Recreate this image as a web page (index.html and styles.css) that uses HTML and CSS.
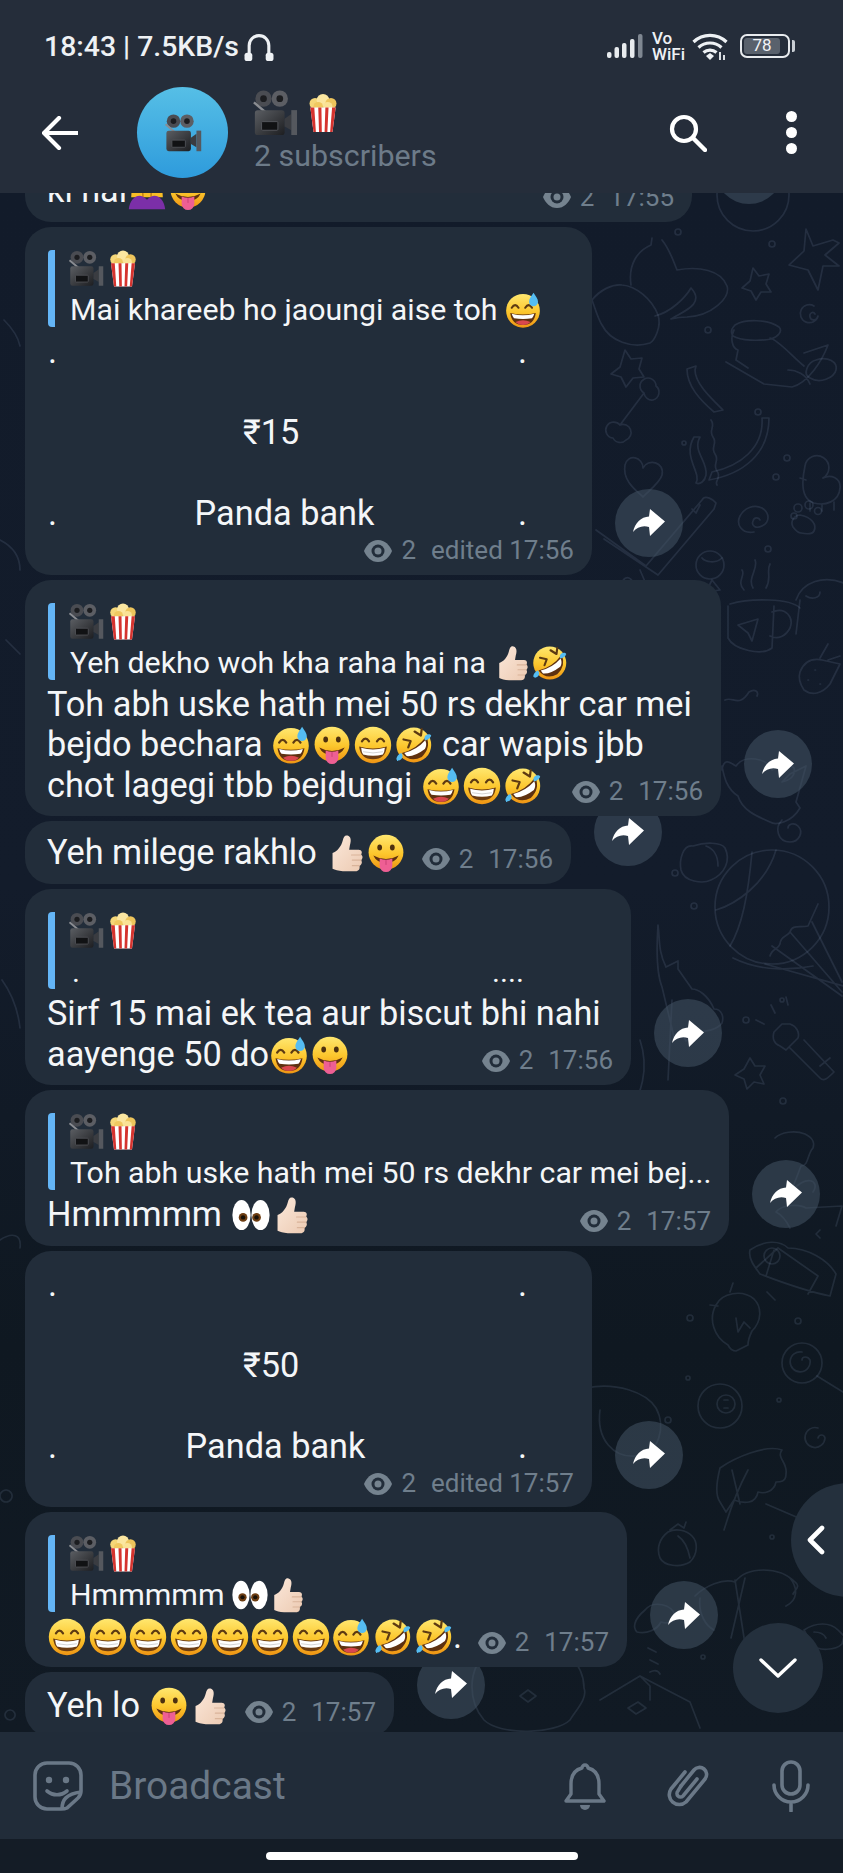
FILE: index.html
```html
<!DOCTYPE html>
<html lang="en">
<head>
<meta charset="utf-8">
<title>Channel</title>
<link rel="stylesheet" href="styles.css">
</head>
<body>
<svg class="defs" aria-hidden="true">
  <defs>
    <linearGradient id="gFace" x1="0" y1="0" x2="0" y2="1"><stop offset="0" stop-color="#ffe76f"/><stop offset=".55" stop-color="#fcc62c"/><stop offset="1" stop-color="#ee9414"/></linearGradient>
    <linearGradient id="gBody" x1="0" y1="0" x2="1" y2="1"><stop offset="0" stop-color="#5b5e63"/><stop offset="1" stop-color="#1d1e21"/></linearGradient>
    <linearGradient id="gThumb" x1="0" y1="0" x2="1" y2="1"><stop offset="0" stop-color="#fbe8da"/><stop offset="1" stop-color="#eccab2"/></linearGradient>
    <symbol id="grin" viewBox="0 0 48 48"><circle cx="24" cy="24" r="23" fill="url(#gFace)"/><path d="M10 19.500q4.500-7 9 0M29 19.500q4.500-7 9 0" fill="none" stroke="#5d3a12" stroke-width="2.800" stroke-linecap="round"/><path d="M6.500 26Q24 31 41.500 26 40 42 24 42 8 42 6.500 26z" fill="#6b3c12"/><path d="M9 27.500Q24 32 39 27.500 38.500 33 36.500 36 24 39 11.500 36 9.500 33 9 27.500z" fill="#fff"/><path d="M11.500 32.500Q24 35.500 36.500 32.500" fill="none" stroke="#c9c9c9" stroke-width="1"/></symbol>
    <symbol id="sweat" viewBox="0 0 48 48"><circle cx="24" cy="25" r="22.500" fill="url(#gFace)"/><path d="M9 21q4.500-7 9 0M27 21q4.500-7 9 0" fill="none" stroke="#5d3a12" stroke-width="2.800" stroke-linecap="round"/><path d="M7 28Q24 32 41 28 39 44 24 44 9 44 7 28z" fill="#5e3110"/><path d="M9 29Q24 33 39 29 38 33 36 35 24 37 12 35 10 33 9 29z" fill="#fff"/><path d="M14 40q10-5 20 0-4 4-10 4t-10-4z" fill="#d9484e"/><path d="M38 1c3 5 6 8 6 12a6 6 0 0 1-12 0c0-4 3-7 6-12z" fill="#55bdf2"/></symbol>
    <symbol id="tongue" viewBox="0 0 48 48"><circle cx="24" cy="23" r="22" fill="url(#gFace)"/><ellipse cx="16" cy="17" rx="3" ry="3.800" fill="#4d300f"/><ellipse cx="32" cy="17" rx="3" ry="3.800" fill="#4d300f"/><path d="M8 27Q24 36 40 27 36 36 24 37 12 36 8 27z" fill="#5e3110"/><path d="M16 31q8 3 16 0v9a8 8 0 0 1-16 0z" fill="#ee5f94"/><path d="M24 33v6" stroke="#c93f74" stroke-width="1.200"/></symbol>
    <symbol id="rofl" viewBox="0 0 48 48"><circle cx="25" cy="24" r="22" fill="url(#gFace)"/><path d="M26 7l8 5 1-8M12 17l9 2-3 8" fill="none" stroke="#5d3a12" stroke-width="2.800" stroke-linecap="round" stroke-linejoin="round"/><path d="M10 34Q28 30 41 13 47 28 35 39 20 47 10 34z" fill="#5e3110"/><path d="M13 34Q29 30 39.500 18 42 24 39 29 26 39 16 38z" fill="#fff"/><path d="M3 42c0-3 3-7 6-8 2 2 3 5 0 8-2 2-5 2-6 0z" fill="#55bdf2"/><path d="M47 12c-1 3-4 6-8 6-1-2-1-5 2-7 2-1 5-1 6 1z" fill="#55bdf2"/></symbol>
    <symbol id="thumb" viewBox="0 0 48 48"><path d="M7 24C13 22 18 16 20 8 21 3 23 1 26 2 30 3 31 8 29 14L28 20H40C44 20 45 24 43 26 46 28 45 32 43 33 45 35 44 39 41 40 42 44 40 47 36 47H20C14 47 10 45 7 44z" fill="url(#gThumb)"/><path d="M31 26.500h12M32 33h11M32 40h9" stroke="#d9b49a" stroke-width="1.400" stroke-linecap="round"/></symbol>
    <symbol id="eyes" viewBox="0 0 48 48"><ellipse cx="12" cy="24" rx="11.500" ry="19" fill="#fff"/><ellipse cx="36" cy="24" rx="11.500" ry="19" fill="#fff"/><circle cx="14" cy="27" r="5.500" fill="#6d3d12"/><circle cx="14" cy="27" r="2.800" fill="#171008"/><circle cx="31" cy="27" r="5.500" fill="#6d3d12"/><circle cx="31" cy="27" r="2.800" fill="#171008"/></symbol>
    <symbol id="bow" viewBox="0 0 48 48"><path d="M6 2h36l2 30H4z" fill="#f8bd26"/><path d="M17 2l2 30M31 2l-2 30" stroke="#c98512" stroke-width="2"/><path d="M1 47c1-9 6-17 14-17 4 0 7 3 9 5 2-2 5-5 9-5 8 0 13 8 14 17z" fill="#7b2fa8"/></symbol>
    <symbol id="camera" viewBox="0 0 48 48"><circle cx="12" cy="9" r="8.500" fill="#4a4c52"/><circle cx="12" cy="9" r="3.500" fill="#1c1d20"/><circle cx="29" cy="9" r="8.500" fill="#5c5e64"/><circle cx="29" cy="9" r="3.500" fill="#1c1d20"/><path d="M2 13l13 11" stroke="#8b8d92" stroke-width="2.500"/><rect x="3" y="21" width="31" height="26" rx="3" fill="url(#gBody)"/><rect x="10" y="33" width="17" height="9" rx="1" fill="#111214" stroke="#55575c"/><path d="M34 30l7-5v17l-7-4z" fill="#3a3c41"/><path d="M41 21h6v26h-6z" fill="#55585e"/></symbol>
    <symbol id="popcorn" viewBox="0 0 48 48"><circle cx="14" cy="12" r="7" fill="#f5d778"/><circle cx="24" cy="8" r="8" fill="#fbe6a0"/><circle cx="34" cy="12" r="7" fill="#eec55c"/><circle cx="18" cy="16" r="6" fill="#f0c85f"/><circle cx="30" cy="16" r="6" fill="#fae295"/><path d="M8 17h32l-4 31H12z" fill="#fff"/><path d="M8 17h5l2 31h-3zM18 17h4l.5 31h-3.500zM27 17h4l-1.500 31H26zM35.500 17H40l-4 31h-3z" fill="#d5332e"/></symbol>
    <symbol id="eye" viewBox="0 0 28 22"><path d="M14 0C7 0 2.500 5 0 11c2.500 6 7 11 14 11s11.500-5 14-11C25.500 5 21 0 14 0z" fill="#75838f"/><circle cx="14" cy="11" r="6.500" fill="#222d3a"/><circle cx="14" cy="11" r="3.500" fill="#75838f"/></symbol>
    <symbol id="fwd" viewBox="0 0 32 27"><path d="M17 0l15 12.500L17 27l-1-9C10 16 4 18 0 23 2 14 8 8 16 7.500z" fill="#fff"/></symbol>
  </defs>
</svg>

<div class="app">
  <header class="top">
    <div class="status">
      <span class="clock">18:43 | 7.5KB/s</span>
      <svg class="phones" viewBox="0 0 29 28"><path d="M5 24V13a9.500 9.500 0 0 1 19 0v11" fill="none" stroke="#eef1f4" stroke-width="3"/><rect x="0.500" y="20" width="7.500" height="8" rx="2.500" fill="#eef1f4"/><rect x="21" y="20" width="7.500" height="8" rx="2.500" fill="#eef1f4"/></svg>
      <div class="status-right">
        <svg class="signal" viewBox="0 0 36 24"><rect x="0" y="18" width="4.500" height="6" rx="2" fill="#e8ebee"/><rect x="7.500" y="13" width="4.500" height="11" rx="2" fill="#e8ebee"/><rect x="15" y="9" width="4.500" height="15" rx="2" fill="#e8ebee"/><rect x="23" y="5" width="4.500" height="19" rx="2" fill="#e8ebee"/><rect x="31" y="0" width="4.500" height="24" rx="2" fill="#7f8791"/></svg>
        <div class="vowifi"><span>Vo</span><span>WiFi</span></div>
        <svg class="wifi" viewBox="0 0 36 28"><path d="M1.500 10a24 24 0 0 1 33 0M6.500 15.500a17 17 0 0 1 23 0M11.500 20.500a10 10 0 0 1 13 0" fill="none" stroke="#eef1f4" stroke-width="3.200"/><path d="M14 24l4-3 4 3-4 4z" fill="#eef1f4"/><path d="M28 20v8M32 23v5" stroke="#eef1f4" stroke-width="1.800"/></svg>
        <div class="battery"><span class="batt-num">78</span></div>
        <span class="batt-tip"></span>
      </div>
    </div>
    <div class="bar">
      <svg class="back" viewBox="0 0 36 34"><path d="M17 2L2 17l15 15M3 17h32" fill="none" stroke="#fff" stroke-width="4.200" stroke-linecap="round" stroke-linejoin="round"/></svg>
      <div class="avatar"><svg class="avatar-cam"><use href="#camera"/></svg></div>
      <div class="title">
        <div class="title-em"><svg class="t-cam"><use href="#camera"/></svg><svg class="t-pop"><use href="#popcorn"/></svg></div>
        <div class="subs">2 subscribers</div>
      </div>
      <svg class="search" viewBox="0 0 38 38"><circle cx="15" cy="15" r="12" fill="none" stroke="#fff" stroke-width="4.200"/><path d="M24 24l12 12" stroke="#fff" stroke-width="4.400" stroke-linecap="round"/></svg>
      <div class="dots"><i></i><i></i><i></i></div>
    </div>
  </header>

  <main class="chat">
    <svg class="paper" viewBox="0 193 843 1540" aria-hidden="true">
      <g fill="none" stroke="#8ea4c4" stroke-opacity=".15" stroke-width="1.700" stroke-linecap="round" stroke-linejoin="round">
        <circle cx="753" cy="195" r="36"/>
        <path d="M806 229l7 17 20-6 6 3-14 12 14 11-16 0-5 24-10-20-19-5 15-14z"/>
        <path d="M753 268l6 8 10-2-3 10 5 8-10 0-5 8-5-9-9-3 8-7z"/>
        <path d="M814 306a9 9 0 1 0 4 10c-1 5-7 5-8 1-1-4 3-6 5-3"/>
        <circle cx="678" cy="232" r="3"/><circle cx="772" cy="244" r="3"/><circle cx="708" cy="330" r="3"/><circle cx="758" cy="412" r="3"/><circle cx="787" cy="458" r="3"/><circle cx="776" cy="477" r="3"/><circle cx="768" cy="549" r="3"/><circle cx="684" cy="443" r="2"/>
        <path d="M592 300c8-10 20-16 30-15 14 1 30 14 36 30 4 12-4 26-8 28-18 6-40-2-48-18-4-6-8-20-10-25z"/>
        <path d="M631 285c-3-20 6-34 20-40l1-7M662 240c8 10 11 20 15 30 22-4 44 0 50 16 4 12-16 30-40 31-6 0-12 1-16 2 8-6 36-14 20-31-6 10-20 24-36 28"/>
        <path d="M625 350l6 9 11-1-3 11 5 8-11 1-7 9-5-10-10-3 9-7z"/>
        <path d="M620 425l24-32m0 0a8 8 0 1 1 12-7 8 8 0 0 1-3 14 8 8 0 0 1-9-7zm-24 32a8 8 0 1 0-7 13 8 8 0 0 0 13 2 8 8 0 0 0-6-15z"/>
        <path d="M695 370c0 14 18 30 28 40l-9 2c-14-12-27-26-27-43l9-3z"/>
        <path d="M711 420c5 7-3 10 2 17s-3 10 2 17-3 10 2 17-3 10 0 14"/>
        <path d="M762 418c2 30-22 48-50 54l-3 8c34-6 60-26 60-62z"/>
        <path d="M700 437c-8 14 8 24 6 38-1 6-6 10-10 8 6-10-14-26-2-46z"/>
        <path d="M735 325c10-6 32-6 44 2 4 4-1 10-8 12-12 2-30 2-38-3-3-4-1-8 2-11zM734 330c-4 8-2 18 4 20l-2 10 12 8M770 338c8 2 20 16 34 28M726 362l38 22 28 3c16-4 30-26 36-42l-24 8M788 370c8 0 18 4 22 14"/>
        <path d="M816 360c-8 2-14 14-6 18 10 6 24 0 26-8 2-8-8-14-20-10z"/>
        <path d="M805 466a12 12 0 1 1 18 12c8-4 18 0 17 10-1 14-15 18-26 15-10-3-14-14-9-37zM806 480l-6-2M810 503v8M822 505v6M834 502v8"/>
        <path d="M800 515c-6 0-10 7-7 12 3 4 5 6 8 6 5 1 11 2 13-2 3-6-2-14-14-16z"/><circle cx="798" cy="508" r="4"/><circle cx="809" cy="505" r="4"/><circle cx="818" cy="511" r="3.500"/><circle cx="794" cy="516" r="3"/>
        <path d="M754 532c-13 2-18-8-14-16s14-12 22-8c8 5 8 14 0 18-6 3-11 0-9-5 1-4 6-4 7-1"/>
        <path d="M625 465c3-12 18-8 18 3 5-10 22-6 19 7-2 8-16 18-19 22-6-6-21-16-18-32z"/>
        <path d="M596 530l50 36 56-66c3-6 12 0 14 3l-2 6-56 66-54-36M700 505l-4 8-4-4"/>
        <circle cx="710" cy="565" r="14"/><path d="M702 558c3 4 14 6 20 0M712 580l-6 12 14-2z"/>
        <path d="M624 595c-8-18 8-24 10-8 1 8-2 12-3 14M640 570l6 14"/>
        <path d="M742 570c4 5-6 12 2 20M755 560c4 8-8 18-2 28M770 564c-4 8 2 14-4 24M730 604c20-6 60-6 70 4"/>
        <path d="M796 600c6-18 28-26 50-16M800 600l-4 34M806 596c6 4 14 2 14-4"/>
        <path d="M728 606v32c6 12 34 18 44 10l2-42M772 612c14-6 22 6 18 16-4 8-12 12-20 8"/><path d="M738 625l20-6-6 22-4-8z"/>
        <path d="M800 672c4-10 12-14 22-12l18 4-10 20c-8 10-18 12-26 6-4-6-6-12-4-18zM820 658l8-14M828 660l12-4M815 670h.5M808 680h.5M820 684h.5"/>
        <path d="M722 770c2-14 10-6 14-4 8-12 32-8 36 4 6-4 16-8 22-2 2 8-4 12-12 14l8-8 16-8-10 36 4 6c-8 14-24 18-30 14-14-6-28-12-32-26-12-8-14-20-16-30zM725 700c8-4 14 8 24-8 6-4 10 0 8 4"/>
        <path d="M782 820c-8 8-4 22 8 22 9 0 14-10 8-16-4-4-10-2-10 2"/>
        <path d="M693 846c-10-2-14 14-12 24 3 12 22 14 30 10 14-6 20-20 14-32-4-6-20-6-32-2zM706 846c6 2 12 8 12 20"/>
        <circle cx="675" cy="873" r="3"/><circle cx="694" cy="906" r="3"/><circle cx="746" cy="1020" r="3"/><circle cx="782" cy="1000" r="2"/><circle cx="783" cy="1101" r="3"/>
        <circle cx="772" cy="907" r="57"/>
        <path d="M716 910c20-6 50-26 60-60M730 946c12-20 18-50 22-94M733 958c28 14 60 12 80 8M770 956c2-8 8-6 10-12 0-8 8-8 10-12 2-8 10-4 18-6l10-22M772 946l70 50M765 964l78 22M812 922l30 60M790 932l52 60"/>
        <path d="M658 925c2 14 0 26 8 42l12-6 0 8 14 20c6 0 16 6 22 20 8 0 10 8 8 14-6 8-18 8-28 10l-8 8c-4-10-10-2-12-4l-12-50c-4-10-6-32-4-62zM672 1000l-4 80"/>
        <path d="M782 1024l-8 8c-2 6 0 12 6 14l6 4 12-12c2-6-2-12-8-14zM790 1048l30 30c4 4 8 0 14-6l-30-32M820 1066l10-8M775 1013l-4-8M788 1005l-2-8M764 1024l-8-4"/>
        <path d="M750 1058l5 8 10 0-5 9 4 9-10-2-7 7-3-10-9-4 9-6z"/>
        <path d="M640 1040c10 30 0 56-10 70"/>
        <path d="M750 1250c14-10 30-10 38-2 20 0 40 12 48 26l-6 22c-20-4-44-12-70-22-6-8-12-16-10-24zM756 1268l22-20 40 28-10 18M774 1250l-8 26M790 1228c-4-8-10-14-14-16 6-8 24-8 30-4l36-2-6 20"/>
        <path d="M775 1138c6-6 20-8 30-4 8 4 10 8 8 14-6 6-4 18-12 18l-10 26c14-18 30-12 22 0"/>
        <circle cx="772" cy="1256" r="8"/><path d="M820 1230l-4 4 4 4"/>
        <path d="M775 1300l-8-8M730 1292l3-9M718 1306l-8-1M728 1345c-14-8-20-26-12-40 6-12 26-16 38-6 8 8 8 22-2 32-2 4-4 8-4 14l-12 6c-4 0-6-2-8-6zM736 1318l2 14 6-10 6 6"/>
        <circle cx="802" cy="1363" r="20"/><path d="M802 1352a10 10 0 1 0 8 8c-2-4-8-4-8 0M817 1376l26 16"/>
        <circle cx="720" cy="1406" r="22"/><circle cx="726" cy="1404" r="9"/><path d="M724 1400h4M724 1408h4"/>
        <path d="M818 1428a10 10 0 1 0 7 10c-1-4-6-4-7 0"/>
        <circle cx="690" cy="1318" r="3"/><circle cx="798" cy="1321" r="3"/><circle cx="688" cy="1378" r="2"/><circle cx="779" cy="1400" r="2"/><circle cx="668" cy="1420" r="3"/><circle cx="772" cy="1537" r="2"/><circle cx="703" cy="1657" r="2"/>
        <path d="M720 1468c14-10 46-24 62-18-6 8 6 12 4 24 0 8-6 8-10 8-2 10-12 12-18 10-2 12-14 12-24 8l-8 12-6-10c-6-8-2-26 0-34zM732 1470l8 34M724 1530c4-12 8-30 24-60M766 1504l70 30"/>
        <path d="M668 1532c-8 6-12 16-8 26 4 8 20 10 30 4 8-8 8-20 2-26-6-6-16-8-24-4zM670 1530l8-6 6 4 2-6M678 1536c6 4 10 12 12 22"/>
        <path d="M695 1596c10-10 28-18 40-14 12-16 44-16 60 0 6 4 0 8-2 12M735 1580l10 64M745 1578l-14 60M790 1578c8 10 8 22-4 28M700 1598c-2 16 6 28 14 32"/>
        <path d="M804 1630c12-8 26-8 34 0l6 6-2 8c-6 6-24 8-30 0zM814 1632c6 0 10 2 12 6"/>
        <path d="M600 1700l40-24 50 26 10 26M640 1676l10 10 0 14M628 1708l10-6 8 6-10 6zM648 1648l8 4M650 1660l8 4M650 1672c4-2 8-2 10 2"/>
        <path d="M645 1610c8-10 28-6 30 6 0 6-8 8-14 6-4 8-14 12-24 10-4-4-4-12 8-22z"/>
        <path d="M600 1410c-4 30 14 48 36 46 24-2 30-30 20-48-10-16-40-26-70-20"/>
        <path d="M490 1650c20-14 60-14 80 6 8 8 14 18 14 32 4 10-8 22-14 32-14 14-70 16-86 0-14-16-20-50 6-70zM520 1696l8-6 8 6-8 6z"/>
        <path d="M4 320c6 6 14 16 16 26M0 540c12 6 20 16 20 30M6 640l14 14M2 980c10 14 16 30 18 48M0 1240c12-8 22-6 20 8M6 1490a6 6 0 1 0 .1 0M10 1710a5 5 0 1 0 .1 0"/>
      </g>
    </svg>

    <section class="row first">
      <div class="bubble w1 pad-plain">
        <div class="last"><p class="txt">ki hai<svg class="em"><use href="#bow"/></svg><svg class="em"><use href="#tongue"/></svg></p><div class="meta"><svg class="eye"><use href="#eye"/></svg><span class="cnt">2</span><span>17:55</span></div></div>
      </div>
      <button class="fwd"><svg class="fwd-ic"><use href="#fwd"/></svg></button>
    </section>

    <section class="row">
      <div class="bubble w2 pad-reply pad-meta">
        <div class="reply">
          <div class="reply-em"><svg class="em-sm"><use href="#camera"/></svg><svg class="em-sm"><use href="#popcorn"/></svg></div>
          <div class="reply-txt">Mai khareeb ho jaoungi aise toh <svg class="em-r"><use href="#sweat"/></svg></div>
        </div>
        <div class="txt spread gap-t"><span>.</span><span>.</span></div>
        <div class="txt blank"></div>
        <div class="txt amount">₹15</div>
        <div class="txt blank"></div>
        <div class="txt spread"><span>.</span><span class="bank">Panda bank</span><span>.</span></div>
        <div class="meta meta-row"><svg class="eye"><use href="#eye"/></svg><span class="cnt">2</span><span>edited 17:56</span></div>
      </div>
      <button class="fwd"><svg class="fwd-ic"><use href="#fwd"/></svg></button>
    </section>

    <section class="row">
      <div class="bubble w3 pad-reply">
        <div class="reply">
          <div class="reply-em"><svg class="em-sm"><use href="#camera"/></svg><svg class="em-sm"><use href="#popcorn"/></svg></div>
          <div class="reply-txt">Yeh dekho woh kha raha hai na <svg class="em-r"><use href="#thumb"/></svg><svg class="em-r"><use href="#rofl"/></svg></div>
        </div>
        <p class="txt gap-t">Toh abh uske hath mei 50 rs dekhr car mei<br>bejdo bechara <svg class="em"><use href="#sweat"/></svg><svg class="em"><use href="#tongue"/></svg><svg class="em"><use href="#grin"/></svg><svg class="em"><use href="#rofl"/></svg> car wapis jbb</p>
        <div class="last"><p class="txt">chot lagegi tbb bejdungi <svg class="em"><use href="#sweat"/></svg><svg class="em"><use href="#grin"/></svg><svg class="em"><use href="#rofl"/></svg></p><div class="meta"><svg class="eye"><use href="#eye"/></svg><span class="cnt">2</span><span>17:56</span></div></div>
      </div>
      <button class="fwd"><svg class="fwd-ic"><use href="#fwd"/></svg></button>
    </section>

    <section class="row">
      <div class="bubble w4 pad-plain">
        <div class="last"><p class="txt">Yeh milege rakhlo <svg class="em"><use href="#thumb"/></svg><svg class="em"><use href="#tongue"/></svg></p><div class="meta"><svg class="eye"><use href="#eye"/></svg><span class="cnt">2</span><span>17:56</span></div></div>
      </div>
      <button class="fwd"><svg class="fwd-ic"><use href="#fwd"/></svg></button>
    </section>

    <section class="row">
      <div class="bubble w5 pad-reply">
        <div class="reply">
          <div class="reply-em"><svg class="em-sm"><use href="#camera"/></svg><svg class="em-sm"><use href="#popcorn"/></svg></div>
          <div class="reply-txt reply-dots"><span>.</span><span>....</span></div>
        </div>
        <p class="txt gap-t">Sirf 15 mai ek tea aur biscut bhi nahi</p>
        <div class="last"><p class="txt">aayenge 50 do<svg class="em"><use href="#sweat"/></svg><svg class="em"><use href="#tongue"/></svg></p><div class="meta"><svg class="eye"><use href="#eye"/></svg><span class="cnt">2</span><span>17:56</span></div></div>
      </div>
      <button class="fwd"><svg class="fwd-ic"><use href="#fwd"/></svg></button>
    </section>

    <section class="row">
      <div class="bubble w6 pad-reply">
        <div class="reply">
          <div class="reply-em"><svg class="em-sm"><use href="#camera"/></svg><svg class="em-sm"><use href="#popcorn"/></svg></div>
          <div class="reply-txt">Toh abh uske hath mei 50 rs dekhr car mei bej...</div>
        </div>
        <div class="last gap-t"><p class="txt">Hmmmmm <svg class="em"><use href="#eyes"/></svg><svg class="em"><use href="#thumb"/></svg></p><div class="meta"><svg class="eye"><use href="#eye"/></svg><span class="cnt">2</span><span>17:57</span></div></div>
      </div>
      <button class="fwd"><svg class="fwd-ic"><use href="#fwd"/></svg></button>
    </section>

    <section class="row">
      <div class="bubble w2 pad-top">
        <div class="txt spread"><span>.</span><span>.</span></div>
        <div class="txt blank"></div>
        <div class="txt amount">₹50</div>
        <div class="txt blank"></div>
        <div class="txt spread"><span>.</span><span class="bank bank-l">Panda bank</span><span>.</span></div>
        <div class="meta meta-row"><svg class="eye"><use href="#eye"/></svg><span class="cnt">2</span><span>edited 17:57</span></div>
      </div>
      <button class="fwd"><svg class="fwd-ic"><use href="#fwd"/></svg></button>
    </section>

    <section class="row">
      <div class="bubble w8 pad-reply">
        <div class="reply">
          <div class="reply-em"><svg class="em-sm"><use href="#camera"/></svg><svg class="em-sm"><use href="#popcorn"/></svg></div>
          <div class="reply-txt">Hmmmmm <svg class="em-r"><use href="#eyes"/></svg><svg class="em-r"><use href="#thumb"/></svg></div>
        </div>
        <div class="last gap-t"><p class="txt"><svg class="em"><use href="#grin"/></svg><svg class="em"><use href="#grin"/></svg><svg class="em"><use href="#grin"/></svg><svg class="em"><use href="#grin"/></svg><svg class="em"><use href="#grin"/></svg><svg class="em"><use href="#grin"/></svg><svg class="em"><use href="#grin"/></svg><svg class="em"><use href="#sweat"/></svg><svg class="em"><use href="#rofl"/></svg><svg class="em"><use href="#rofl"/></svg>.</p><div class="meta"><svg class="eye"><use href="#eye"/></svg><span class="cnt">2</span><span>17:57</span></div></div>
      </div>
      <button class="fwd"><svg class="fwd-ic"><use href="#fwd"/></svg></button>
    </section>

    <section class="row">
      <div class="bubble w9 pad-plain pad-last">
        <div class="last"><p class="txt">Yeh lo <svg class="em"><use href="#tongue"/></svg><svg class="em"><use href="#thumb"/></svg></p><div class="meta"><svg class="eye"><use href="#eye"/></svg><span class="cnt">2</span><span>17:57</span></div></div>
      </div>
      <button class="fwd"><svg class="fwd-ic"><use href="#fwd"/></svg></button>
    </section>

    <button class="fab fab-side"><svg class="chev-l" viewBox="0 0 18 30"><path d="M15 3L3 15l12 12" fill="none" stroke="#fff" stroke-width="4.600" stroke-linecap="round" stroke-linejoin="round"/></svg></button>
    <button class="fab fab-down"><svg class="chev-d" viewBox="0 0 38 20"><path d="M2 2l17 16L36 2" fill="none" stroke="#fff" stroke-width="3.400" stroke-linecap="round" stroke-linejoin="round"/></svg></button>
  </main>

  <footer class="input">
    <svg class="i-sticker" viewBox="0 0 50 50"><path d="M14 2h22a12 12 0 0 1 12 12v16c0 3-1 5-3 7L34 47c-2 1-4 1-6 1H14A12 12 0 0 1 2 36V14A12 12 0 0 1 14 2z" fill="none" stroke="#6a7887" stroke-width="3.600"/><path d="M29 48c0-9 4-15 19-17" fill="none" stroke="#6a7887" stroke-width="3.600"/><circle cx="16" cy="19" r="3.200" fill="#6a7887"/><circle cx="33" cy="19" r="3.200" fill="#6a7887"/><path d="M14 30c6 5 14 5 20 0" fill="none" stroke="#6a7887" stroke-width="3.600" stroke-linecap="round"/></svg>
    <span class="placeholder">Broadcast</span>
    <svg class="i-bell" viewBox="0 0 42 50"><path d="M21 4a3 3 0 0 1 3 3c8 2 11 8 11 16v10l5 7H2l5-7V23c0-8 3-14 11-16a3 3 0 0 1 3-3z" fill="none" stroke="#6a7887" stroke-width="3.400" stroke-linejoin="round"/><path d="M16 44h10a5 5 0 0 1-10 0z" fill="#6a7887"/></svg>
    <svg class="i-clip" viewBox="0 0 42 48"><path d="M14 24L27 8a7 7 0 0 1 11 9L19 40a10 10 0 0 1-15-13L18 10" fill="none" stroke="#6a7887" stroke-width="3.600" stroke-linecap="round" stroke-linejoin="round"/><path d="M14 24l-3 5a3.500 3.500 0 0 0 5 5l14-17" fill="none" stroke="#6a7887" stroke-width="3.600" stroke-linecap="round"/></svg>
    <svg class="i-mic" viewBox="0 0 38 52"><rect x="10" y="2" width="18" height="32" rx="9" fill="none" stroke="#6a7887" stroke-width="3.600"/><path d="M2 25a17 17 0 0 0 34 0M19 42v9" fill="none" stroke="#6a7887" stroke-width="3.600" stroke-linecap="round"/></svg>
  </footer>
  <div class="nav"><span class="home"></span></div>
</div>
</body>
</html>
```

FILE: styles.css
```css
* { box-sizing: border-box; }
html, body { margin: 0; padding: 0; background: #0f1721; }
body { font-family: Roboto, "Noto Sans", "Liberation Sans", sans-serif; color: #f4f6f8; }
p { margin: 0; }
button { border: 0; padding: 0; font: inherit; cursor: pointer; }
.defs { position: absolute; width: 0; height: 0; overflow: hidden; }

.app { width: 843px; height: 1873px; display: flex; flex-direction: column; overflow: hidden; }

/* top */
.top { height: 193px; flex: none; background: #252d3a; position: relative; z-index: 3; }
.status { height: 80px; display: flex; align-items: center; padding: 12px 48px 0 44px; }
.clock { font-size: 28.400px; font-weight: 500; color: #eef1f4; white-space: nowrap; }
.phones { width: 30px; height: 29px; margin-left: 5px; }
.status-right { margin-left: auto; display: flex; align-items: center; }
.signal { width: 36px; height: 24px; }
.vowifi { display: flex; flex-direction: column; margin-left: 9px; font-size: 17px; line-height: 16px; font-weight: 500; color: #eef1f4; width: 34px; }
.wifi { width: 36px; height: 28px; margin-left: 6px; }
.battery { width: 50px; height: 24px; margin-left: 12px; border: 2.500px solid #e8ebee; border-radius: 7px; padding: 2px; display: flex; }
.batt-num { display: block; width: 36px; background: #59616c; border-radius: 3px; font-size: 17px; line-height: 15px; text-align: center; color: #f1f3f5; }
.batt-tip { width: 3px; height: 12px; margin-left: 2px; background: #c9ced4; border-radius: 0 2px 2px 0; }

.bar { height: 113px; display: flex; align-items: center; padding: 0 46px 8px 42px; }
.back { width: 36px; height: 34px; flex: none; }
.avatar { width: 91px; height: 91px; border-radius: 50%; margin-left: 59px; background: linear-gradient(180deg, #56bfe6, #2e9bdc); display: flex; align-items: center; justify-content: center; flex: none; }
.avatar-cam { width: 38px; height: 38px; }
.title { margin-left: 26px; align-self: flex-start; padding-top: 10px; }
.title-em { display: flex; gap: 5px; height: 46px; margin-left: -3px; }
.t-cam { width: 48px; height: 46px; }
.t-pop { width: 38px; height: 46px; }
.subs { font-size: 30.400px; line-height: 36px; color: #6d7b89; margin-top: 2px; }
.search { width: 38px; height: 38px; margin-left: auto; }
.dots { display: flex; flex-direction: column; gap: 5px; margin-left: 79px; }
.dots i { display: block; width: 11px; height: 11px; background: #fff; border-radius: 50%; }

/* chat */
.chat { flex: 1; min-height: 0; position: relative; overflow: hidden; display: flex; flex-direction: column; gap: 5px; background: linear-gradient(180deg, #121b2a 0%, #131c2b 45%, #0f1821 75%, #111a24 100%); }
.paper { position: absolute; left: 0; top: 0; width: 843px; height: 1540px; }
.row { position: relative; width: fit-content; margin-left: 25px; flex: none; }
.first { margin-top: -34px; }
.bubble { position: relative; z-index: 1; background: #222d3a; border-radius: 26px; padding-left: 22px; padding-right: 18px; }
.w1 { width: 667px; }
.w2 { width: 567px; }
.w3 { width: 696px; }
.w4 { width: 546px; }
.w5 { width: 606px; }
.w6 { width: 704px; }
.w8 { width: 602px; }
.w9 { width: 369px; }
.pad-reply { padding-top: 23px; padding-bottom: 11px; }
.pad-plain { padding-top: 11px; padding-bottom: 11px; }
.pad-top { padding-top: 13px; padding-bottom: 6px; }
.pad-last { padding-top: 13px; padding-bottom: 11px; }
.pad-meta { padding-bottom: 7px; }

.txt { font-size: 34.300px; line-height: 40.600px; white-space: nowrap; color: #f4f6f8; }
.blank { height: 40.600px; }
.gap-t { margin-top: 4px; }
.spread { display: flex; justify-content: space-between; width: 480px; padding-left: 1px; }
.amount { padding-left: 196px; }
.bank { margin-right: 6px; }
.bank-l { margin-right: 24px; }
.last { display: flex; justify-content: space-between; align-items: flex-end; }

.reply { border-left: 7px solid #64b5f6; border-radius: 4px; padding-left: 15px; height: 77px; margin-left: 1px; }
.reply-em { display: flex; height: 42px; gap: 1px; margin-left: -2px; }
.em-sm { width: 36px; height: 37px; }
.reply-txt { font-size: 30.300px; line-height: 36px; white-space: nowrap; color: #f4f6f8; }
.reply-dots { display: flex; justify-content: space-between; width: 454px; padding-left: 2px; }
.em { width: 38px; height: 38px; margin: 0 1.300px; vertical-align: -8px; }
.em-r { width: 36px; height: 36px; margin: 0 .5px; vertical-align: -8px; }

.meta { display: flex; align-items: center; font-size: 26px; line-height: 25px; color: #6f7e8c; white-space: nowrap; flex: none; margin-bottom: 1px; }
.meta-row { height: 34px; justify-content: flex-end; margin-bottom: 0; }
.eye { width: 28px; height: 22px; margin-right: 9px; }
.cnt { margin-right: 15px; }

.fwd { position: absolute; left: calc(100% + 23px); bottom: 18px; width: 68px; height: 68px; border-radius: 50%; background: rgba(68, 84, 100, .55); display: flex; align-items: center; justify-content: center; z-index: 0; }
.fwd-ic { width: 32px; height: 27px; }

.fab { position: absolute; border-radius: 50%; background: #24303d; display: flex; align-items: center; z-index: 2; }
.fab-side { left: 791px; top: 1290px; width: 114px; height: 114px; padding-left: 16px; }
.fab-down { left: 733px; top: 1430px; width: 90px; height: 90px; justify-content: center; }
.chev-l { width: 18px; height: 30px; }
.chev-d { width: 38px; height: 20px; }

/* input */
.input { height: 107px; flex: none; background: #212c39; display: flex; align-items: center; padding-left: 33px; position: relative; z-index: 3; }
.i-sticker { width: 50px; height: 50px; }
.placeholder { font-size: 38.900px; color: #6a7887; margin-left: 26px; }
.i-bell { width: 42px; height: 50px; margin-left: auto; }
.i-clip { width: 42px; height: 48px; margin-left: 61px; }
.i-mic { width: 38px; height: 52px; margin-left: 63px; margin-right: 33px; }
.nav { height: 34px; flex: none; background: #141c26; display: flex; justify-content: center; padding-top: 13px; }
.home { display: block; width: 312px; height: 8px; background: #fff; border-radius: 4px; }
```
